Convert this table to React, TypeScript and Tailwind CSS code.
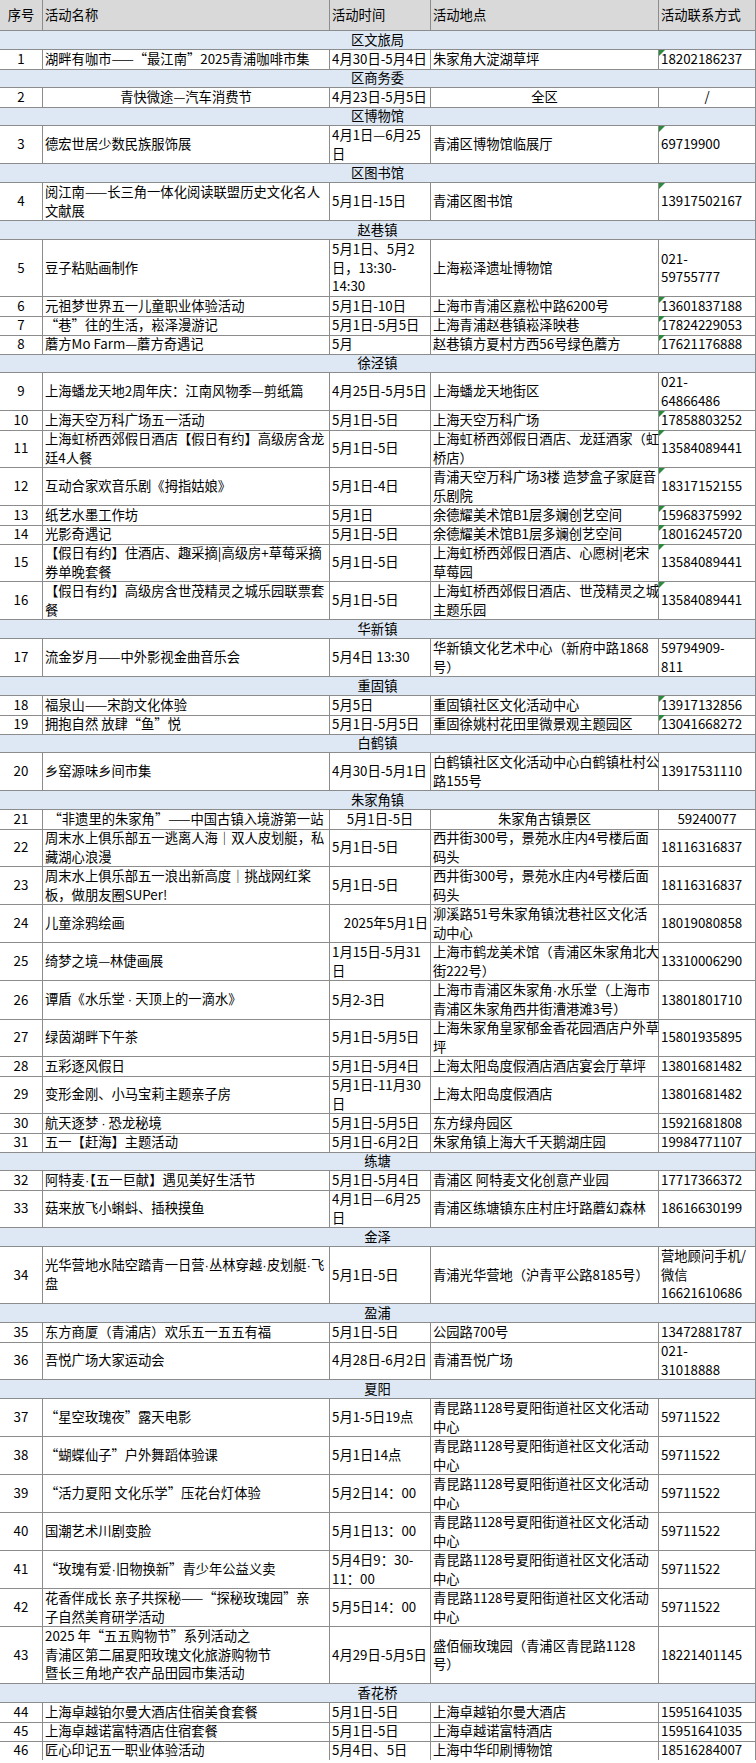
import React from 'react';
import clsx from 'clsx';

type Sec = { s: string };
type Act = {
  n: number;
  a: string[];
  b: string[];
  c: string[];
  d: string[];
  h: 1 | 2 | 3;
  mid?: boolean;
  tri?: boolean;
  br?: boolean;
};
type Item = Sec | Act;

const H = { 1: 'h-[19px]', 2: 'h-[38px]', 3: 'h-[57px]' };
const XY = ['青昆路1128号夏阳街道社区文化活动', '中心'];

const rows: Item[] = [
  { s: '区文旅局' },
  { n: 1, a: ['湖畔有咖市——“最江南”2025青浦咖啡市集'], b: ['4月30日-5月4日'], c: ['朱家角大淀湖草坪'], d: ['18202186237'], h: 1, tri: true },
  { s: '区商务委' },
  { n: 2, a: ['青快微途—汽车消费节'], b: ['4月23日-5月5日'], c: ['全区'], d: ['/'], h: 1, mid: true },
  { s: '区博物馆' },
  { n: 3, a: ['德宏世居少数民族服饰展'], b: ['4月1日—6月25', '日'], c: ['青浦区博物馆临展厅'], d: ['69719900'], h: 2, tri: true },
  { s: '区图书馆' },
  { n: 4, a: ['阅江南——长三角一体化阅读联盟历史文化名人', '文献展'], b: ['5月1日-15日'], c: ['青浦区图书馆'], d: ['13917502167'], h: 2, tri: true },
  { s: '赵巷镇' },
  { n: 5, a: ['豆子粘贴画制作'], b: ['5月1日、5月2', '日，13:30-', '14:30'], c: ['上海崧泽遗址博物馆'], d: ['021-', '59755777'], h: 3 },
  { n: 6, a: ['元祖梦世界五一儿童职业体验活动'], b: ['5月1日-10日'], c: ['上海市青浦区嘉松中路6200号'], d: ['13601837188'], h: 1, tri: true },
  { n: 7, a: ['“巷”往的生活，崧泽漫游记'], b: ['5月1日-5月5日'], c: ['上海青浦赵巷镇崧泽映巷'], d: ['17824229053'], h: 1, tri: true },
  { n: 8, a: ['蘑方Mo Farm—蘑方奇遇记'], b: ['5月'], c: ['赵巷镇方夏村方西56号绿色蘑方'], d: ['17621176888'], h: 1, tri: true },
  { s: '徐泾镇' },
  { n: 9, a: ['上海蟠龙天地2周年庆：江南风物季—剪纸篇'], b: ['4月25日-5月5日'], c: ['上海蟠龙天地街区'], d: ['021-', '64866486'], h: 2 },
  { n: 10, a: ['上海天空万科广场五一活动'], b: ['5月1日-5日'], c: ['上海天空万科广场'], d: ['17858803252'], h: 1, tri: true },
  { n: 11, a: ['上海虹桥西郊假日酒店【假日有约】高级房含龙', '廷4人餐'], b: ['5月1日-5日'], c: ['上海虹桥西郊假日酒店、龙廷酒家（虹', '桥店）'], d: ['13584089441'], h: 2, tri: true },
  { n: 12, a: ['互动合家欢音乐剧《拇指姑娘》'], b: ['5月1日-4日'], c: ['青浦天空万科广场3楼 造梦盒子家庭音', '乐剧院'], d: ['18317152155'], h: 2, tri: true },
  { n: 13, a: ['纸艺水墨工作坊'], b: ['5月1日'], c: ['余德耀美术馆B1层多斓创艺空间'], d: ['15968375992'], h: 1, tri: true },
  { n: 14, a: ['光影奇遇记'], b: ['5月1日-5日'], c: ['余德耀美术馆B1层多斓创艺空间'], d: ['18016245720'], h: 1, tri: true },
  { n: 15, a: ['【假日有约】住酒店、趣采摘|高级房+草莓采摘', '券单晚套餐'], b: ['5月1日-5日'], c: ['上海虹桥西郊假日酒店、心愿树|老宋', '草莓园'], d: ['13584089441'], h: 2, tri: true },
  { n: 16, a: ['【假日有约】高级房含世茂精灵之城乐园联票套', '餐'], b: ['5月1日-5日'], c: ['上海虹桥西郊假日酒店、世茂精灵之城', '主题乐园'], d: ['13584089441'], h: 2, tri: true },
  { s: '华新镇' },
  { n: 17, a: ['流金岁月——中外影视金曲音乐会'], b: ['5月4日 13:30'], c: ['华新镇文化艺术中心（新府中路1868', '号）'], d: ['59794909-', '811'], h: 2 },
  { s: '重固镇' },
  { n: 18, a: ['福泉山——宋韵文化体验'], b: ['5月5日'], c: ['重固镇社区文化活动中心'], d: ['13917132856'], h: 1, tri: true },
  { n: 19, a: ['拥抱自然 放肆“鱼”悦'], b: ['5月1日-5月5日'], c: ['重固徐姚村花田里微景观主题园区'], d: ['13041668272'], h: 1, tri: true },
  { s: '白鹤镇' },
  { n: 20, a: ['乡窑源味乡间市集'], b: ['4月30日-5月1日'], c: ['白鹤镇社区文化活动中心白鹤镇杜村公', '路155号'], d: ['13917531110'], h: 2 },
  { s: '朱家角镇' },
  { n: 21, a: ['“非遗里的朱家角”——中国古镇入境游第一站'], b: ['5月1日-5日'], c: ['朱家角古镇景区'], d: ['59240077'], h: 1, mid: true },
  { n: 22, a: ['周末水上俱乐部五一逃离人海｜双人皮划艇，私', '藏湖心浪漫'], b: ['5月1日-5日'], c: ['西井街300号，景苑水庄内4号楼后面', '码头'], d: ['18116316837'], h: 2 },
  { n: 23, a: ['周末水上俱乐部五一浪出新高度｜挑战网红桨', '板，做朋友圈SUPer!'], b: ['5月1日-5日'], c: ['西井街300号，景苑水庄内4号楼后面', '码头'], d: ['18116316837'], h: 2 },
  { n: 24, a: ['儿童涂鸦绘画'], b: ['2025年5月1日'], c: ['泖溪路51号朱家角镇沈巷社区文化活', '动中心'], d: ['18019080858'], h: 2, br: true },
  { n: 25, a: ['绮梦之境—林倢画展'], b: ['1月15日-5月31', '日'], c: ['上海市鹤龙美术馆（青浦区朱家角北大', '街222号）'], d: ['13310006290'], h: 2 },
  { n: 26, a: ['谭盾《水乐堂 · 天顶上的一滴水》'], b: ['5月2-3日'], c: ['上海市青浦区朱家角·水乐堂（上海市', '青浦区朱家角西井街漕港滩3号）'], d: ['13801801710'], h: 2 },
  { n: 27, a: ['绿茵湖畔下午茶'], b: ['5月1日-5月5日'], c: ['上海朱家角皇家郁金香花园酒店户外草', '坪'], d: ['15801935895'], h: 2 },
  { n: 28, a: ['五彩逐风假日'], b: ['5月1日-5月4日'], c: ['上海太阳岛度假酒店酒店宴会厅草坪'], d: ['13801681482'], h: 1 },
  { n: 29, a: ['变形金刚、小马宝莉主题亲子房'], b: ['5月1日-11月30', '日'], c: ['上海太阳岛度假酒店'], d: ['13801681482'], h: 2 },
  { n: 30, a: ['航天逐梦 · 恐龙秘境'], b: ['5月1日-5月5日'], c: ['东方绿舟园区'], d: ['15921681808'], h: 1 },
  { n: 31, a: ['五一【赶海】主题活动'], b: ['5月1日-6月2日'], c: ['朱家角镇上海大千天鹅湖庄园'], d: ['19984771107'], h: 1 },
  { s: '练塘' },
  { n: 32, a: ['阿特麦·【五一巨献】遇见美好生活节'], b: ['5月1日-5月4日'], c: ['青浦区 阿特麦文化创意产业园'], d: ['17717366372'], h: 1 },
  { n: 33, a: ['菇来放飞小蝌蚪、插秧摸鱼'], b: ['4月1日—6月25', '日'], c: ['青浦区练塘镇东庄村庄圩路蘑幻森林'], d: ['18616630199'], h: 2 },
  { s: '金泽' },
  { n: 34, a: ['光华营地水陆空踏青一日营·丛林穿越·皮划艇·飞', '盘'], b: ['5月1日-5日'], c: ['青浦光华营地（沪青平公路8185号）'], d: ['营地顾问手机/', '微信', '16621610686'], h: 3 },
  { s: '盈浦' },
  { n: 35, a: ['东方商厦（青浦店）欢乐五一五五有福'], b: ['5月1日-5日'], c: ['公园路700号'], d: ['13472881787'], h: 1 },
  { n: 36, a: ['吾悦广场大家运动会'], b: ['4月28日-6月2日'], c: ['青浦吾悦广场'], d: ['021-', '31018888'], h: 2 },
  { s: '夏阳' },
  { n: 37, a: ['“星空玫瑰夜”露天电影'], b: ['5月1-5日19点'], c: XY, d: ['59711522'], h: 2 },
  { n: 38, a: ['“蝴蝶仙子”户外舞蹈体验课'], b: ['5月1日14点'], c: XY, d: ['59711522'], h: 2 },
  { n: 39, a: ['“活力夏阳 文化乐学”压花台灯体验'], b: ['5月2日14：00'], c: XY, d: ['59711522'], h: 2 },
  { n: 40, a: ['国潮艺术川剧变脸'], b: ['5月1日13：00'], c: XY, d: ['59711522'], h: 2 },
  { n: 41, a: ['“玫瑰有爱·旧物换新”青少年公益义卖'], b: ['5月4日9：30-', '11：00'], c: XY, d: ['59711522'], h: 2 },
  { n: 42, a: ['花香伴成长 亲子共探秘——“探秘玫瑰园”亲', '子自然美育研学活动'], b: ['5月5日14：00'], c: XY, d: ['59711522'], h: 2 },
  { n: 43, a: ['2025 年“五五购物节”系列活动之', '青浦区第二届夏阳玫瑰文化旅游购物节', '暨长三角地产农产品田园市集活动'], b: ['4月29日-5月5日'], c: ['盛佰俪玫瑰园（青浦区青昆路1128', '号）'], d: ['18221401145'], h: 3 },
  { s: '香花桥' },
  { n: 44, a: ['上海卓越铂尔曼大酒店住宿美食套餐'], b: ['5月1日-5日'], c: ['上海卓越铂尔曼大酒店'], d: ['15951641035'], h: 1 },
  { n: 45, a: ['上海卓越诺富特酒店住宿套餐'], b: ['5月1日-5日'], c: ['上海卓越诺富特酒店'], d: ['15951641035'], h: 1 },
  { n: 46, a: ['匠心印记五一职业体验活动'], b: ['5月4日、5日'], c: ['上海中华印刷博物馆'], d: ['18516284007'], h: 1 },
];

// the middle dot is narrow in the sheet, Noto CJK draws it full width
function Line({ text }: { text: string }) {
  const parts = text.split('·');
  return (
    <>
      {parts.map((p, i) => (
        <React.Fragment key={i}>
          {i > 0 && <span className="font-['Liberation_Sans',sans-serif] leading-[18px]">·</span>}
          {p}
        </React.Fragment>
      ))}
    </>
  );
}

function Cell({ lines, align = 'l', tri }: { lines: string[]; align?: 'l' | 'c' | 'r'; tri?: boolean }) {
  return (
    <div
      className={clsx(
        'relative flex flex-col justify-center border-r border-b border-[#8c8c8c] px-[2px]',
        align === 'c' && 'items-center',
        align === 'r' && 'items-end',
        align === 'l' && 'items-start'
      )}
    >
      {tri && (
        <span className="absolute left-0 top-0 h-0 w-0 border-t-[6px] border-r-[6px] border-t-[#2b8a3e] border-r-transparent" />
      )}
      {lines.map((l, i) => (
        <div key={i} className="whitespace-pre leading-[18.5px]">
          <Line text={l} />
        </div>
      ))}
    </div>
  );
}

const cols = 'grid grid-cols-[43px_287px_101px_228px_97px]';

export default function App() {
  return (
    <div className="w-[756px] bg-white font-['Noto_Sans_CJK_SC','Microsoft_YaHei',sans-serif] text-[13.3px] text-black">
      <div className={clsx(cols, 'h-[31px] bg-[#d9d9d9]')}>
        <Cell lines={['序号']} align="c" />
        <Cell lines={['活动名称']} />
        <Cell lines={['活动时间']} />
        <Cell lines={['活动地点']} />
        <Cell lines={['活动联系方式']} />
      </div>

      {rows.map((r, i) =>
        's' in r ? (
          <div
            key={i}
            className="flex h-[19px] items-center justify-center border-r border-b border-[#8c8c8c] bg-[#dde8f4] leading-[18px]"
          >
            {r.s}
          </div>
        ) : (
          <div key={i} className={clsx(cols, H[r.h])}>
            <Cell lines={[String(r.n)]} align="c" />
            <Cell lines={r.a} align={r.mid ? 'c' : 'l'} />
            <Cell lines={r.b} align={r.br ? 'r' : r.mid && r.n === 21 ? 'c' : 'l'} />
            <Cell lines={r.c} align={r.mid ? 'c' : 'l'} />
            <Cell lines={r.d} align={r.mid ? 'c' : 'l'} tri={r.tri} />
          </div>
        )
      )}
    </div>
  );
}
